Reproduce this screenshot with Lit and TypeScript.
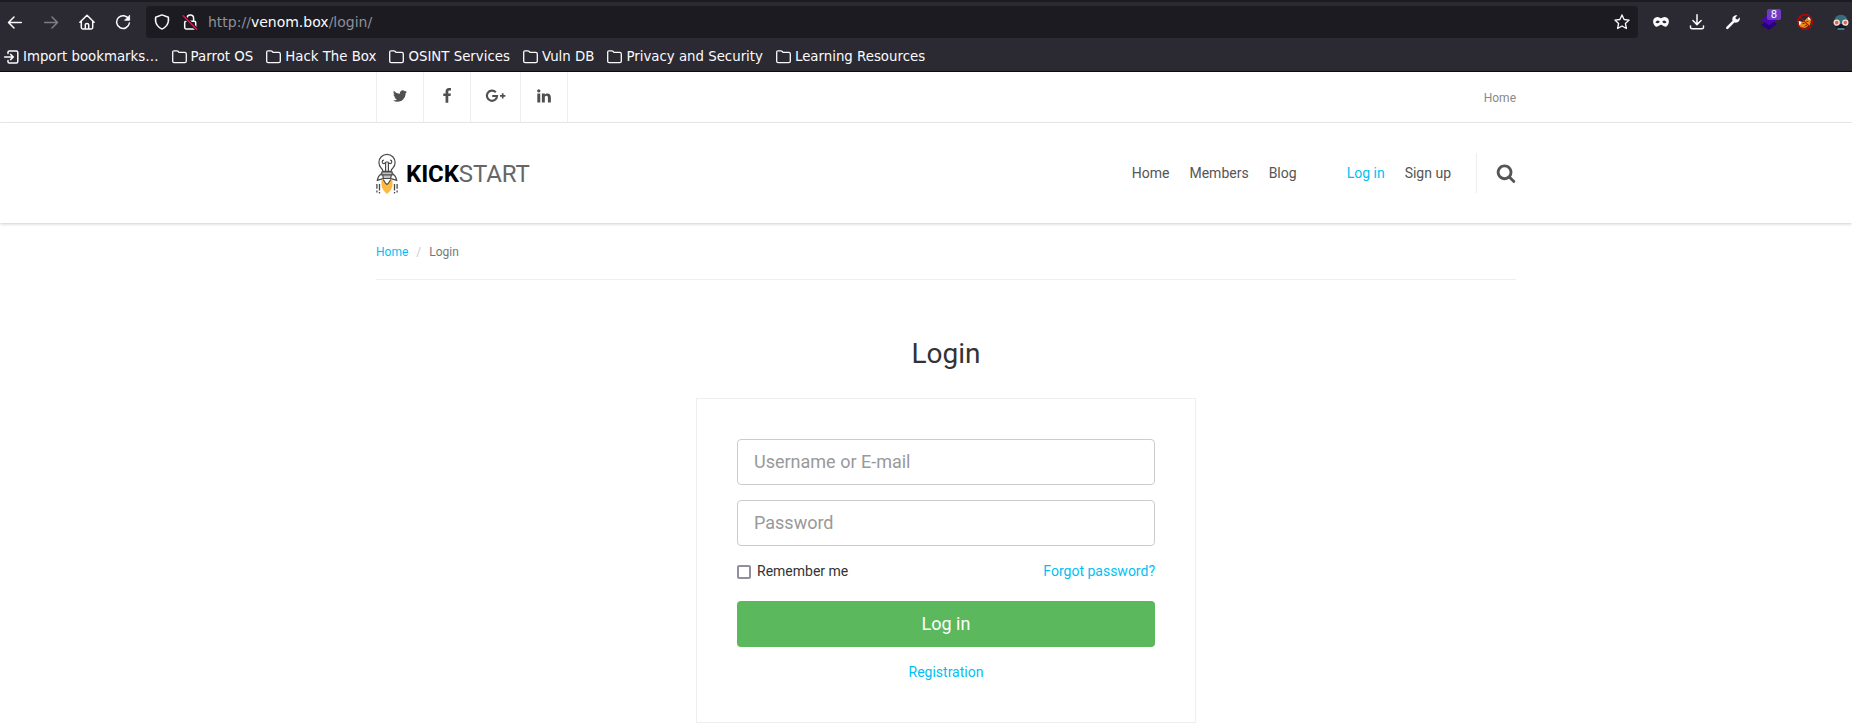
import { LitElement, html, css, svg } from "lit";
import { customElement } from "lit/decorators.js";

const folder = html`<svg class="folder" width="15" height="14" viewBox="0 0 15 14"><path d="M.7 11.3V2.2Q.7.8 2.1.8H4.8Q5.5.8 6 1.3L7 2.4H12.8Q14.3 2.4 14.3 3.9V11.3Q14.3 12.7 12.8 12.7H2.1Q.7 12.7.7 11.3Z"/></svg>`;

const bookmarks = ["Parrot OS", "Hack The Box", "OSINT Services", "Vuln DB", "Privacy and Security", "Learning Resources"];

const socials = [
  svg`<path d="M1684 408q-67 98-162 167 1 14 1 42 0 130-38 259.5t-115.5 248.5-184.5 210.5-258 146-323 54.5q-271 0-496-145 35 4 78 4 225 0 401-138-105-2-188-64.5t-114-159.5q33 5 61 5 43 0 85-11-112-23-185.5-111.5t-73.5-205.5v-4q68 38 146 41-66-44-105-115t-39-154q0-88 44-163 121 149 294.5 238.5t371.5 99.5q-8-38-8-74 0-134 94.5-228.5t228.5-94.5q140 0 236 102 109-21 205-78-37 115-142 178 93-10 186-50z"/>`,
  svg`<path d="M1343 12v264h-157q-86 0-116 36t-30 108v189h293l-39 296h-254v759h-306v-759h-255v-296h255v-218q0-186 104-288.5t277-102.5q147 0 228 12z"/>`,
  null,
  svg`<path d="M477 625v991h-330v-991h330zm21-306q1 73-50.5 122t-135.5 49h-2q-82 0-132-49t-50-122q0-74 51.5-122.5t134.5-48.5 133 48.5 51 122.5zm1166 729v568h-329v-530q0-105-40.5-164.5t-126.5-59.5q-63 0-105.5 34.5t-63.5 85.5q-11 30-11 81v553h-329q2-399 2-647t-1-296l-1-48h329v144h-2q20-32 41-56t56.5-52 87-43.5 114.5-15.5q171 0 275 113.5t104 332.5z"/>`,
];

@customElement("browser-chrome")
class BrowserChrome extends LitElement {
  static styles = css`
    :host { display: block; height: 72px; box-sizing: border-box; background: #2b2a33; border-top: 2px solid #1c1b22; border-bottom: 1px solid #0c0c0d; color: #fbfbfe; font-family: "DejaVu Sans", sans-serif; overflow: hidden; }
    svg { display: block; fill: none; stroke: #fbfbfe; stroke-width: 1.5; stroke-linecap: round; stroke-linejoin: round; flex: none; }
    .bar { display: flex; align-items: center; height: 32px; padding-top: 4px; }
    .nav { display: flex; gap: 20px; padding-left: 7px; width: 146px; box-sizing: border-box; flex: none; }
    .dim { opacity: .4; }
    .url { display: flex; flex: none; align-items: center; width: 1492px; height: 32px; box-sizing: border-box; background: #1c1b22; border-radius: 4px; padding: 0 8px; }
    .lock { margin-left: 12px; }
    .address { flex: 1; margin-left: 10px; font-size: 14px; line-height: 18px; color: #8f8f98; white-space: pre; }
    .address b { font-weight: 400; color: #fbfbfe; }
    .tools { display: flex; flex: none; gap: 20px; padding-left: 15px; }
    .marks { display: flex; align-items: center; height: 34px; padding: 2px 0 0 4px; gap: 13px; font-size: 13.33px; line-height: 18px; }
    .mark { display: flex; align-items: center; gap: 4px; white-space: nowrap; }
    .folder { stroke-width: 1.3; }
    .ext { position: relative; }
    .badge { position: absolute; left: 6px; top: -5px; width: 14px; height: 11px; background: #6e3bc4; border-radius: 2px; font: 10px/11px "DejaVu Sans", sans-serif; text-align: center; }
  `;
  render() {
    return html`
      <div class="bar">
        <div class="nav">
          <svg width="16" height="16" viewBox="0 0 16 16"><path d="M14.3 8.5H1.7M7 3 1.5 8.5 7 14"/></svg>
          <svg class="dim" width="16" height="16" viewBox="0 0 16 16"><path d="M1.7 8.5h12.6M9 3 14.5 8.5 9 14"/></svg>
          <svg width="16" height="16" viewBox="0 0 16 16"><path d="M.9 8.2 8 1.2l7.1 7M2.3 7.2v6.4q0 1.4 1.4 1.4h8.6q1.4 0 1.4-1.4V7.2M6.3 15v-4.2q0-1.4 1.7-1.4t1.7 1.4V15"/></svg>
          <svg width="16" height="16" viewBox="0 0 16 16"><path d="M13.8 5.2A6.4 6.4 0 1 0 14.4 9"/><path d="M14.6 1.6v4.7H9.9z" fill="#fbfbfe" stroke-width=".8"/></svg>
        </div>
        <div class="url">
          <svg width="16" height="16" viewBox="0 0 16 16"><path d="M8 .9 14.4 3.3Q15 8 12.7 11.4 10.6 14.2 8 15.1 5.4 14.2 3.3 11.4 1 8 1.6 3.3Z"/></svg>
          <svg class="lock" width="16" height="16" viewBox="0 0 16 16"><path d="M5 7V4.2a3.2 3.2 0 0 1 6.6 0V7M4 7.3h8.4q1.3 0 1.3 1.3v5q0 1.4-1.3 1.4H4q-1.3 0-1.3-1.4v-5Q2.7 7.3 4 7.3Z"/><path d="M1.2 1.8 14.4 15" stroke="#1c1b22" stroke-width="3.5"/><path d="M1.2 1.8 14.6 15.2" stroke="#e31450"/></svg>
          <span class="address">http://<b>venom.box</b>/login/</span>
          <svg width="16" height="16" viewBox="0 0 16 16"><path d="m8 .9 2.1 4.6 5 .6-3.7 3.4 1 5L8 12l-4.4 2.5 1-5L.9 6.1l5-.6z" stroke-width="1.3"/></svg>
        </div>
        <div class="tools">
          <svg width="16" height="16" viewBox="0 0 16 16"><path d="M3.5 3.2C5.5 2.6 6.7 4.2 8 4.2s2.5-1.6 4.5-1c4.6.6 4.1 7.4.9 9.2-2.3 1-3.9-1.6-5.4-1.6s-3.1 2.6-5.4 1.6C-.6 10.6-1.1 3.8 3.5 3.2Z" fill="#fbfbfe" stroke="none"/><path d="M2.4 8.3Q4.5 5.2 6.8 7.8 4.6 10.6 2.4 8.3ZM13.6 8.3Q11.5 5.2 9.2 7.8 11.4 10.6 13.6 8.3Z" fill="#2b2a33" stroke="none"/></svg>
          <svg width="16" height="16" viewBox="0 0 16 16"><path d="M8 .8v9.5M3.9 6.5 8 10.6l4.1-4.1M1.5 12v1.2q0 1.6 1.6 1.6h9.8q1.6 0 1.6-1.6V12"/></svg>
          <svg width="16" height="16" viewBox="0 0 16 16"><path d="M2.3 13.9 9 7.2" stroke-width="2.6"/><path d="M14.7 3.5 12.2 5.8 10.2 4 12.4 1.3C9 .7 6.7 3.3 7.5 6.4L9.6 8.6C13 9.3 15.6 6.5 14.7 3.5Z" fill="#fbfbfe" stroke="none"/></svg>
          <div class="ext"><svg width="16" height="16" viewBox="0 0 16 16"><path d="m8 5 8 5-8 6-8-5z" fill="#27027c" stroke="none"/><path d="m8 .5 8 5.3-8 5.4-8-5.4z" fill="#4b06b4" stroke="none"/></svg><span class="badge">8</span></div>
          <svg width="16" height="16" viewBox="0 0 16 16"><path d="m3 13-1-6 4 1 5-5 3 3-1 5-5 3z" fill="#e98b19" stroke="none"/><path d="m1.5 7 3 1-2 4zM11.500 2.500l2.500 3-3 0z" fill="#fff" stroke="none"/><path d="M6 9.500h1M10 7.500h1M8 12l2-1" stroke="#48351f" stroke-width="1"/><circle cx="8" cy="8" r="7.300" stroke="#d20000" stroke-width="1.200"/><path d="m2.800 2.800 10.400 10.400" stroke="#d20000" stroke-width="1.200"/></svg>
          <svg width="16" height="16" viewBox="0 0 16 16"><path d="M1 8Q2 .8 8 .8T15 8l-1 4H2z" fill="#356d7c" stroke="none"/><path d="M3 10h10l-.5 5.500h-9z" fill="#111820" stroke="none"/><path d="M5 15h6" stroke="#5b98aa"/><circle cx="3.700" cy="8.600" r="2.500" fill="#e65f4e" stroke="#f5ded9" stroke-width="1.400"/><circle cx="12.300" cy="8.600" r="2.500" fill="#e65f4e" stroke="#f5ded9" stroke-width="1.400"/></svg>
        </div>
      </div>
      <div class="marks">
        <div class="mark"><svg width="15" height="14" viewBox="0 0 15 14"><path d="M4 3.500V2.300Q4 1 5.300 1h7q1.500 0 1.500 1.500v9q0 1.500-1.500 1.500h-7Q4 13 4 11.700v-1.200M.5 7h8.200M6.600 4.400 9.300 7 6.600 9.600"/></svg>Import bookmarks…</div>
        ${bookmarks.map((b) => html`<div class="mark">${folder}${b}</div>`)}
      </div>`;
  }
}

@customElement("login-form")
class LoginForm extends LitElement {
  static styles = css`
    :host { display: block; width: 500px; margin: 0 auto; }
    h1 { margin: 0 0 26px; font-size: 28px; font-weight: 400; line-height: 36px; text-align: center; color: #333; }
    form { box-sizing: border-box; height: 325px; border: 1px solid #eee; padding: 40px; }
    .field { display: block; box-sizing: border-box; width: 100%; height: 46px; margin-bottom: 15px; border: 1px solid #ccc; border-radius: 4px; padding: 0 16px 2px; font: 18px Roboto, sans-serif; background: #fff; outline: 0; }
    .field::placeholder { color: #999; opacity: 1; }
    .row { display: flex; align-items: center; justify-content: space-between; height: 20px; color: #333; }
    label { display: flex; align-items: center; gap: 6px; }
    input.check { appearance: none; box-sizing: border-box; width: 14px; height: 14px; margin: 2px 0 0; border: 2px solid #8f8f9d; border-radius: 2px; background: #fff; }
    a { color: #00bff3; text-decoration: none; }
    button { display: block; width: 100%; height: 46px; margin: 20px 0 15px; border: 0; border-radius: 4px; background: #5cb85c; color: #fff; font: 18px Roboto, sans-serif; padding: 0 0 2px; }
    .reg { text-align: center; line-height: 20px; }
  `;
  render() {
    return html`<h1>Login</h1>
      <form>
        <input class="field" placeholder="Username or E-mail">
        <input class="field" type="password" placeholder="Password">
        <div class="row"><label><input class="check" type="checkbox">Remember me</label><a>Forgot password?</a></div>
        <button type="button">Log in</button>
        <div class="reg"><a>Registration</a></div>
      </form>`;
  }
}

@customElement("app-root")
class AppRoot extends LitElement {
  static styles = css`
    :host { display: block; height: 723px; overflow: hidden; background: #fff; font: 14px/20px Roboto, sans-serif; color: #333; }
    .container { width: 1140px; margin-left: 376px; box-sizing: border-box; }
    .top { height: 51px; box-sizing: border-box; border-bottom: 1px solid #eee; }
    .top .container { display: flex; justify-content: space-between; height: 50px; }
    .socials { display: flex; border-left: 1px solid #eee; }
    .social { width: 46px; border-right: 1px solid #eee; display: flex; align-items: center; justify-content: center; padding-bottom: 2px; box-sizing: content-box; height: 48px; }
    .social.wide { width: 49px; }
    .social svg { fill: #505050; height: 16px; }
    .toplink { font-size: 12px; line-height: 52px; color: #8a8a8a; }
    .head { height: 100px; box-shadow: 0 1px 3px rgba(0,0,0,.2); }
    .head .container { display: flex; align-items: center; height: 100px; }
    .logo { display: flex; align-items: center; height: 42px; padding-top: 2px; font-size: 24px; line-height: 28px; color: #666; }
    .logo svg { margin-right: 8px; }
    .logo b { color: #000; font-weight: 700; letter-spacing: -.1px; }
    .logo span { letter-spacing: -.1px; }
    .menu { margin-left: auto; display: flex; gap: 20px; color: #555; padding-bottom: 1px; }
    .menu .login { margin-left: 30px; color: #00bff3; }
    .find { display: flex; align-items: center; height: 40px; margin-left: 25px; padding-left: 19px; border-left: 1px solid #eee; }
    .find svg { fill: #555; }
    .crumbs { height: 57px; border-bottom: 1px solid #eee; display: flex; align-items: center; font-size: 12px; color: #777; margin-bottom: 56px; box-sizing: border-box; padding-top: 1px; gap: 8px; }
    .crumbs a { color: #00bff3; }
    .crumbs i { color: #ccc; font-style: normal; }
  `;
  render() {
    return html`
      <browser-chrome></browser-chrome>
      <div class="top"><div class="container">
        <div class="socials">${socials.map((s) => s
          ? html`<div class="social"><svg width="16" height="16" viewBox="0 0 1792 1792">${s}</svg></div>`
          : html`<div class="social wide"><svg width="21" height="16" viewBox="0 0 21 16"><path d="M10.8 4.3A5.1 5.1 0 1 0 12.1 8H7.2" fill="none" stroke="#505050" stroke-width="2.1"/><path d="M15 7.9h5.4M17.7 5.2v5.4" stroke="#505050" stroke-width="1.7"/></svg></div>`)}</div>
        <a class="toplink">Home</a>
      </div></div>
      <div class="head"><div class="container">
        <div class="logo">
          <svg width="22" height="42" viewBox="0 0 22 42" fill="none" stroke="#4a4a4a" stroke-width="1.2">
            <path d="M5.600 27h10.800q.8 6.500-1.500 9.700Q13.300 39 11 41 8.700 39 7.100 36.700q-2.300-3.200-1.500-9.700Z" fill="#fdb940" stroke="none"/>
            <path d="M7.300 26.500 9.500 30.200 11 31.400l1.500-1.200 2.200-3.700" fill="#fff"/>
            <path d="M6.800 18.300Q6.900 16.400 5.300 15.200A8.100 8.100 0 1 1 16.700 15.200Q15.100 16.400 15.200 18.300Z" fill="#fff"/>
            <path d="M9.600 18V9M12.400 18V9M9.600 9H12.400M9.600 9A1.700 1.700 0 1 1 7.900 7.200M12.400 9A1.700 1.700 0 1 0 14.100 7.200"/>
            <path d="M5.800 19h10.400v2.800H5.800zM6.600 21.800h8.800l-.8 3.700H7.400z" fill="#c4c4c4"/>
            <path d="M5.600 20.500Q2 23 1.300 27.300L7 25.600M16.400 20.500Q20 23 20.700 27.300L15 25.600"/>
            <path d="M3.500 31v6.500M18.500 31v6.500M.9 31v4.800M21.100 31v4.800M.9 37.500v2M21.100 37.500v2M3.500 39v1.500M18.500 39v1.500" stroke-width="1.300"/>
          </svg>
          <b>KICK</b><span>START</span>
        </div>
        <nav class="menu"><a>Home</a><a>Members</a><a>Blog</a><a class="login">Log in</a><a>Sign up</a></nav>
        <div class="find"><svg width="20" height="20" viewBox="0 0 1792 1792"><path d="M1216 832q0-185-131.5-316.5t-316.5-131.5-316.5 131.5-131.5 316.5 131.5 316.5 316.5 131.5 316.5-131.5 131.5-316.5zm512 832q0 52-38 90t-90 38q-54 0-90-38l-343-342q-179 124-399 124-143 0-273.5-55.5t-225-150-150-225-55.5-273.5 55.5-273.5 150-225 225-150 273.5-55.5 273.5 55.5 225 150 150 225 55.5 273.5q0 220-124 399l343 343q37 37 37 90z"/></svg></div>
      </div></div>
      <div class="container">
        <div class="crumbs"><a>Home</a><i>/</i><span>Login</span></div>
        <login-form></login-form>
      </div>`;
  }
}
